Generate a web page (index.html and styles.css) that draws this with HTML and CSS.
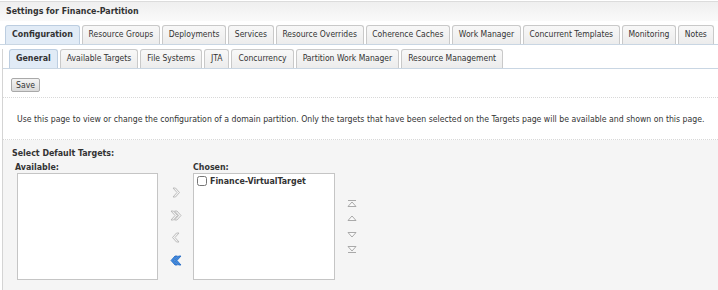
FILE: index.html
```html
<!DOCTYPE html>
<html lang="en">
<head>
  <meta charset="UTF-8">
  <title>Settings for Finance-Partition</title>
  <link rel="stylesheet" href="styles.css">
</head>
<body>
  <div class="title-bar">Settings for Finance-Partition</div>

  <ul class="tabs tabs-main">
    <li class="active">Configuration</li>
    <li>Resource Groups</li>
    <li>Deployments</li>
    <li>Services</li>
    <li>Resource Overrides</li>
    <li>Coherence Caches</li>
    <li>Work Manager</li>
    <li>Concurrent Templates</li>
    <li>Monitoring</li>
    <li>Notes</li>
  </ul>

  <div class="panel">
    <ul class="tabs tabs-sub">
      <li class="active">General</li>
      <li>Available Targets</li>
      <li>File Systems</li>
      <li>JTA</li>
      <li>Concurrency</li>
      <li>Partition Work Manager</li>
      <li>Resource Management</li>
    </ul>

    <div class="toolbar">
      <button class="btn">Save</button>
    </div>

    <p class="intro">Use this page to view or change the configuration of a domain partition. Only the targets that have been selected on the Targets page will be available and shown on this page.</p>

    <div class="targets">
      <div class="section-title">Select Default Targets:</div>
      <div class="shuttle">
        <div class="list-col">
          <div class="list-label">Available:</div>
          <div class="list-box"></div>
        </div>

        <div class="move-btns">
          <svg width="12" height="11" viewBox="0 0 12 11"><path class="chev-off" d="M3 1h2.5l4 4.5-4 4.5H3l4-4.5z"/></svg>
          <svg width="12" height="11" viewBox="0 0 12 11"><path class="chev-off" d="M1 1h2.5l4 4.5-4 4.5H1l4-4.5z"/><path class="chev-off" d="M4.5 1H7l4 4.5-4 4.5H4.5l4-4.5z"/></svg>
          <svg width="12" height="11" viewBox="0 0 12 11"><path class="chev-off" d="M9 1H6.5l-4 4.5 4 4.5H9L5 5.5z"/></svg>
          <svg width="12" height="11" viewBox="0 0 12 11"><path class="chev-on" d="M11 1H8.5l-4 4.5 4 4.5H11L7 5.5z"/><path class="chev-on" d="M7.5 1H5L1 5.5 5 10h2.5l-4-4.5z"/></svg>
        </div>

        <div class="list-col chosen">
          <div class="list-label">Chosen:</div>
          <div class="list-box">
            <label class="list-item"><input type="checkbox"> Finance-VirtualTarget</label>
          </div>
        </div>

        <div class="order-btns">
          <svg width="10" height="8" viewBox="0 0 10 8"><path class="tri" d="M1 1.5h8"/><path class="tri" d="M1 7.5L5 3l4 4.5z"/></svg>
          <svg width="10" height="8" viewBox="0 0 10 8"><path class="tri" d="M1 6.5L5 2l4 4.5z"/></svg>
          <svg class="down" width="10" height="8" viewBox="0 0 10 8"><path class="tri" d="M1 1.5L5 6l4-4.5z"/></svg>
          <svg width="10" height="8" viewBox="0 0 10 8"><path class="tri" d="M1 0.5L5 5l4-4.5z"/><path class="tri" d="M1 6.5h8"/></svg>
        </div>
      </div>
    </div>
  </div>
</body>
</html>
```

FILE: styles.css
```css
body {
  margin: 0;
  font-family: 'DejaVu Sans Condensed', 'DejaVu Sans', sans-serif;
  font-stretch: condensed;
  font-size: 8.6px;
  color: #333;
  background: #fff;
}

.title-bar {
  margin-top: 1px;
  height: 19px;
  line-height: 19px;
  padding-left: 6px;
  border-top: 1px solid #dcdcdc;
  background: linear-gradient(#efefef, #fafafa);
  font-weight: bold;
  font-size: 8.8px;
}

.tabs {
  display: flex;
  gap: 2px;
  list-style: none;
  margin: 0;
  border-bottom: 1px solid #c9d6e3;
}
.tabs li {
  height: 11px;
  line-height: 11px;
  padding: 3px 6px 4px;
  border: 1px solid #c9c9c9;
  border-bottom: none;
  border-radius: 3px 3px 0 0;
  background: linear-gradient(#f8f8f8, #ececec);
  font-size: 8.5px;
  white-space: nowrap;
}
.tabs li.active {
  background: #e1ebf6;
  border-color: #bccde0;
  font-weight: bold;
  font-size: 8.8px;
}
.tabs-main {
  margin-top: 4px;
  padding-left: 5px;
}
.tabs-main li {
  padding-left: 5.7px;
  padding-right: 5.7px;
}
.tabs-main li.active {
  padding-left: 6px;
  padding-right: 6px;
}
.tabs-sub {
  margin-top: 4px;
  padding-left: 6px;
}

.panel {
  margin-left: 2px;
  border-left: 1px solid #d4d4d4;
}

.toolbar {
  padding: 9px 0 5px 8px;
  border-bottom: 1px dotted #d8d8d8;
}
.btn {
  font-family: inherit;
  font-size: 8.6px;
  color: #333;
  height: 14px;
  padding: 0 4px;
  border: 1px solid #a9a9a9;
  border-radius: 2px;
  background: linear-gradient(#f4f4f4, #dadada);
}

.intro {
  margin: 0;
  padding: 16px 0 15px 14px;
  line-height: 10px;
  font-size: 8.66px;
  border-bottom: 1px dotted #d8d8d8;
}

.targets {
  background: #f5f5f5;
  padding: 8px 0 20px 9px;
}
.section-title {
  font-weight: bold;
  font-size: 8.8px;
  line-height: 11px;
  margin-bottom: 3px;
}

.shuttle {
  display: flex;
  align-items: flex-start;
}
.list-col {
  display: flex;
  flex-direction: column;
}
.list-label {
  font-weight: bold;
  font-size: 8.8px;
  line-height: 11px;
  padding-left: 3px;
}
.list-box {
  width: 139px;
  height: 105px;
  margin-left: 5px;
  border: 1px solid #c5c5c5;
  background: #fff;
}
.chosen .list-label {
  padding-left: 0;
}
.chosen .list-box {
  width: 140px;
  margin-left: 0;
}

.list-item {
  display: flex;
  align-items: center;
  gap: 3px;
  padding: 2px 3px;
  font-weight: bold;
  font-size: 8.8px;
}
.list-item input {
  width: 10px;
  height: 10px;
  margin: 0;
}

.move-btns {
  display: flex;
  flex-direction: column;
  gap: 11.5px;
  padding: 25px 11px 0 12px;
}
.chev-off {
  fill: #f2f2f2;
  stroke: #b0b0b0;
  stroke-width: 0.8;
}
.chev-on {
  fill: #3f8be0;
  stroke: #1f66c2;
  stroke-width: 0.8;
}

.order-btns {
  display: flex;
  flex-direction: column;
  gap: 7px;
  padding: 36.5px 0 0 12px;
}
.order-btns .down {
  margin-top: 2px;
}
.tri {
  fill: #fafafa;
  stroke: #a0a0a0;
  stroke-width: 0.9;
}
```
